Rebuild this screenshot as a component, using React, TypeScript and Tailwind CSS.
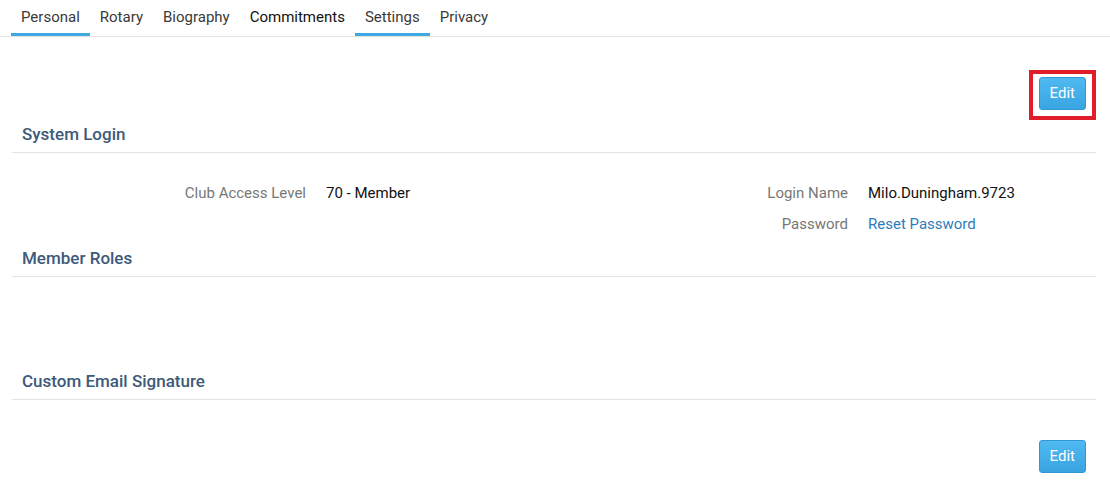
import React from "react";

const tabs = [
  { label: "Personal", active: true },
  { label: "Rotary" },
  { label: "Biography" },
  { label: "Commitments", dark: true },
  { label: "Settings", active: true },
  { label: "Privacy" },
];

function EditButton({ highlight = false }: { highlight?: boolean }) {
  return (
    <div className="relative">
      <button className="h-[33px] rounded-[3px] border border-[#2f98d6] bg-gradient-to-b from-[#4fb9f0] to-[#38a5e2] px-[10px] text-[15px] leading-none text-white">
        Edit
      </button>
      {/* highlight frame drawn over the button */}
      {highlight && (
        <span className="pointer-events-none absolute -left-[10px] -right-[10px] -top-[7px] -bottom-[10px] border-4 border-[#e11d2a]" />
      )}
    </div>
  );
}

function SectionHeading({ title }: { title: string }) {
  return (
    <div className="border-b border-[#e3e3e3] px-[10px] py-[7px]">
      <h2 className="text-[17px] font-medium leading-[22px] text-[#3d5a7a]">
        {title}
      </h2>
    </div>
  );
}

function Field({
  label,
  value,
  link = false,
}: {
  label: string;
  value: string;
  link?: boolean;
}) {
  return (
    <div className="flex h-[31px] items-center">
      <div className="w-[294px] shrink-0 text-right text-[#777]">{label}</div>
      <div className={link ? "pl-[20px] text-[#2e7db8]" : "pl-[20px] text-[#111]"}>
        {value}
      </div>
    </div>
  );
}

export default function App() {
  return (
    <div
      className="h-[488px] w-[1110px] overflow-hidden bg-white text-[15px]"
      style={{ fontFamily: "Roboto, 'Liberation Sans', sans-serif" }}
    >
      {/* Tabs */}
      <nav className="flex border-b border-[#e3e3e3] pl-[11px]">
        {tabs.map((t) => (
          <div
            key={t.label}
            className={
              "h-[36px] border-b-[3px] px-[10px] pt-[7px] leading-[20px] " +
              (t.active ? "border-[#3ea8e3] " : "border-transparent ") +
              (t.dark ? "text-[#111]" : "text-[#3a3a3a]")
            }
          >
            {t.label}
          </div>
        ))}
      </nav>

      <div className="pl-[12px] pr-[14px]">
        <div className="mt-[40px] mb-[6px] flex justify-end pr-[10px]">
          <EditButton highlight />
        </div>

        <SectionHeading title="System Login" />
        <div className="mt-[25px] grid grid-cols-2">
          <div>
            <Field label="Club Access Level" value="70 - Member" />
          </div>
          <div>
            <Field label="Login Name" value="Milo.Duningham.9723" />
            <Field label="Password" value="Reset Password" link />
          </div>
        </div>

        <SectionHeading title="Member Roles" />
        <div className="h-[86px]" />

        <SectionHeading title="Custom Email Signature" />
        <div className="mt-[40px] flex justify-end pr-[10px]">
          <EditButton />
        </div>
      </div>
    </div>
  );
}
